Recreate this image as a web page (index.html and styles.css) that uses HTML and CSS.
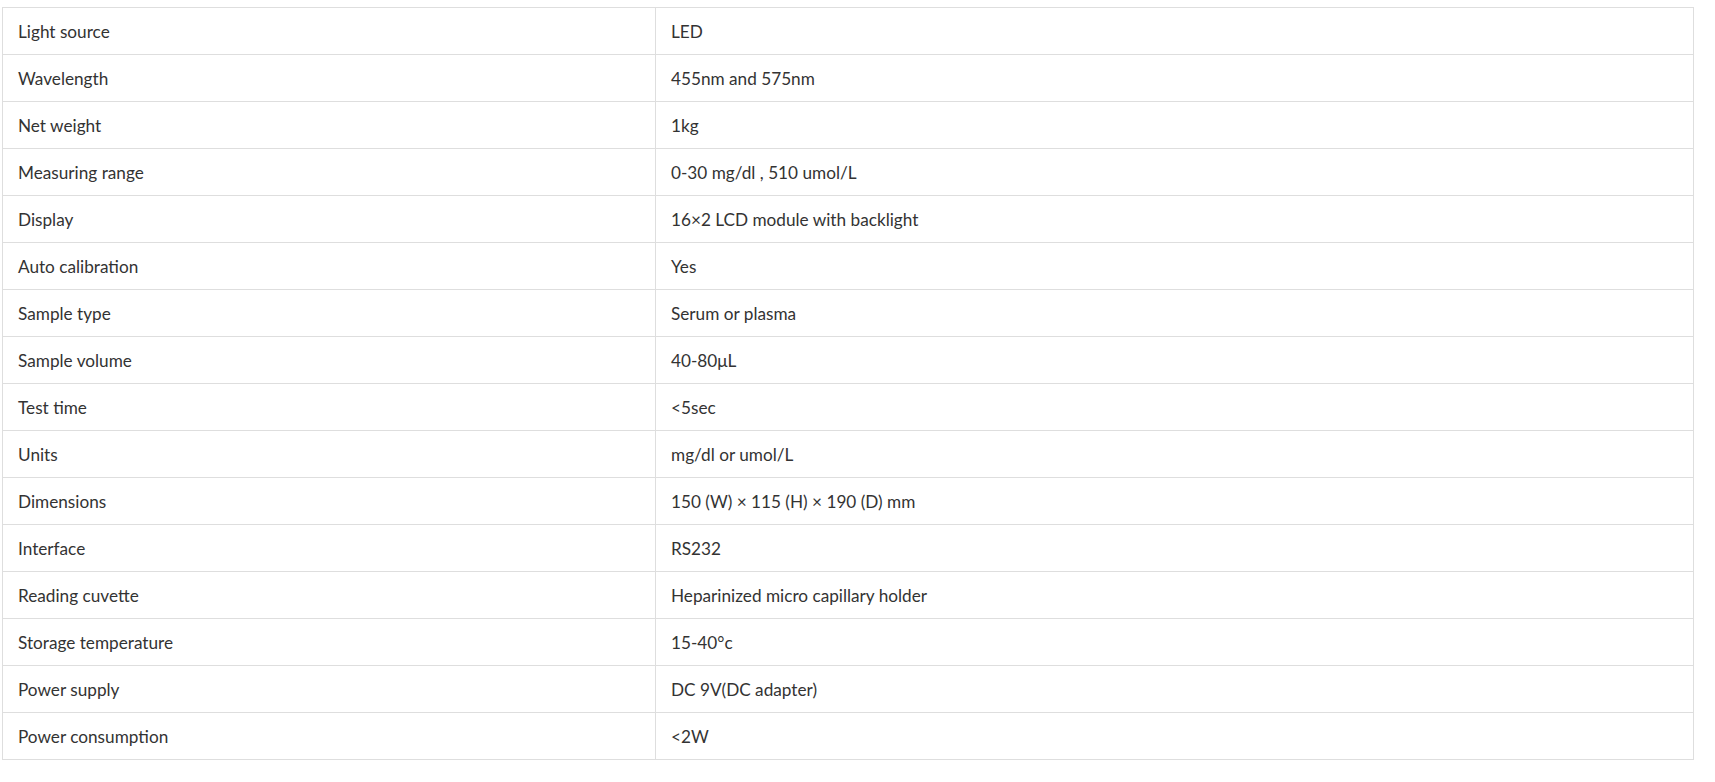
FILE: index.html
```html
<!DOCTYPE html>
<html lang="en">
<head>
<meta charset="utf-8">
<title>Specifications</title>
<link rel="stylesheet" href="styles.css">
</head>
<body>
<div class="wrap">
<table class="spec">
<colgroup><col class="c1"><col class="c2"></colgroup>
<tbody>
<tr><td>Light source</td><td>LED</td></tr>
<tr><td>Wavelength</td><td>455nm and 575nm</td></tr>
<tr><td>Net weight</td><td>1kg</td></tr>
<tr><td>Measuring range</td><td>0-30 mg/dl , 510 umol/L</td></tr>
<tr><td>Display</td><td>16×2 LCD module with backlight</td></tr>
<tr><td>Auto calibration</td><td>Yes</td></tr>
<tr><td>Sample type</td><td>Serum or plasma</td></tr>
<tr><td>Sample volume</td><td>40-80μL</td></tr>
<tr><td>Test time</td><td>&lt;5sec</td></tr>
<tr><td>Units</td><td>mg/dl or umol/L</td></tr>
<tr><td>Dimensions</td><td>150 (W) × 115 (H) × 190 (D) mm</td></tr>
<tr><td>Interface</td><td>RS232</td></tr>
<tr><td>Reading cuvette</td><td>Heparinized micro capillary holder</td></tr>
<tr><td>Storage temperature</td><td>15-40°c</td></tr>
<tr><td>Power supply</td><td>DC 9V(DC adapter)</td></tr>
<tr><td>Power consumption</td><td>&lt;2W</td></tr>
</tbody>
</table>
</div>
</body>
</html>
```
FILE: styles.css
```css
html, body {
  margin: 0;
  padding: 0;
  background: #fff;
}
.wrap {
  padding: 7px 21px 0 2px;
}
.spec {
  width: 100%;
  border-collapse: collapse;
  table-layout: fixed;
  font-family: Lato, "Noto Sans", sans-serif;
  font-size: 17.2px;
  color: #333;
}
.c1 { width: 653px; }
.spec td {
  border: 1px solid #dedede;
  height: 47px;
  box-sizing: border-box;
  padding: 0 15px;
  vertical-align: middle;
  white-space: nowrap;
}
```
